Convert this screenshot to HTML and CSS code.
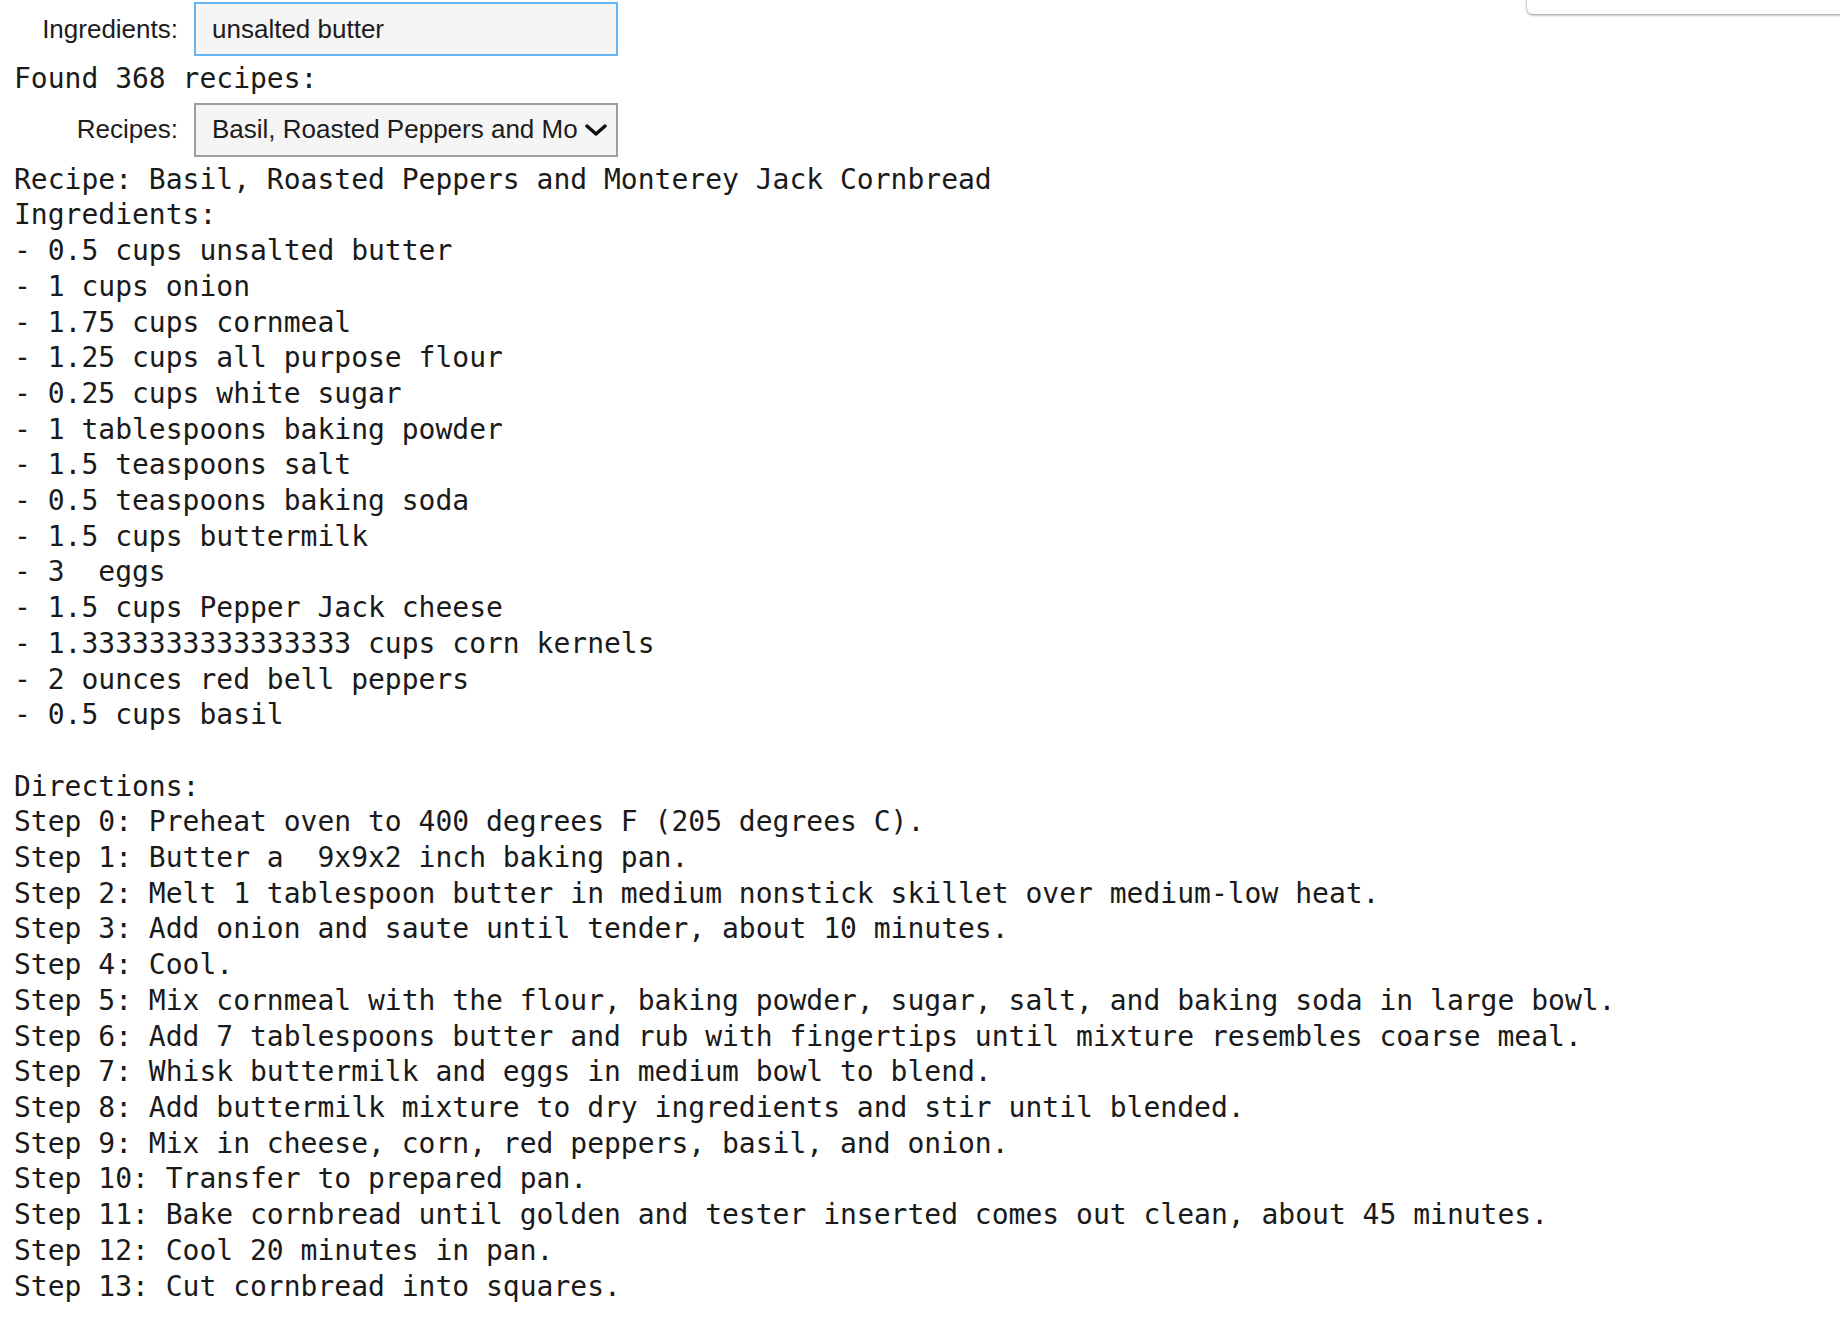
FILE: index.html
```html
<!DOCTYPE html>
<html lang="en">
<head>
<meta charset="utf-8">
<title>Recipe finder</title>
<link rel="stylesheet" href="styles.css">
</head>
<body>
<div class="floating-panel"></div>
<div class="widget-row row-ingredients">
  <label class="widget-label">Ingredients:</label>
  <div class="text-input">unsalted butter</div>
</div>
<pre class="output found">Found 368 recipes:</pre>
<div class="widget-row row-recipes">
  <label class="widget-label">Recipes:</label>
  <div class="select-box">
    <span class="select-text">Basil, Roasted Peppers and Monterey Jack Cornbread</span>
    <svg class="chevron" width="22" height="12" viewBox="0 0 22 12"><polyline points="2,2 11,10 20,2" fill="none" stroke="#111" stroke-width="3.4" stroke-linecap="round" stroke-linejoin="round"/></svg>
  </div>
</div>
<pre class="output recipe">Recipe: Basil, Roasted Peppers and Monterey Jack Cornbread
Ingredients:
- 0.5 cups unsalted butter
- 1 cups onion
- 1.75 cups cornmeal
- 1.25 cups all purpose flour
- 0.25 cups white sugar
- 1 tablespoons baking powder
- 1.5 teaspoons salt
- 0.5 teaspoons baking soda
- 1.5 cups buttermilk
- 3  eggs
- 1.5 cups Pepper Jack cheese
- 1.3333333333333333 cups corn kernels
- 2 ounces red bell peppers
- 0.5 cups basil

Directions:
Step 0: Preheat oven to 400 degrees F (205 degrees C).
Step 1: Butter a  9x9x2 inch baking pan.
Step 2: Melt 1 tablespoon butter in medium nonstick skillet over medium-low heat.
Step 3: Add onion and saute until tender, about 10 minutes.
Step 4: Cool.
Step 5: Mix cornmeal with the flour, baking powder, sugar, salt, and baking soda in large bowl.
Step 6: Add 7 tablespoons butter and rub with fingertips until mixture resembles coarse meal.
Step 7: Whisk buttermilk and eggs in medium bowl to blend.
Step 8: Add buttermilk mixture to dry ingredients and stir until blended.
Step 9: Mix in cheese, corn, red peppers, basil, and onion.
Step 10: Transfer to prepared pan.
Step 11: Bake cornbread until golden and tester inserted comes out clean, about 45 minutes.
Step 12: Cool 20 minutes in pan.
Step 13: Cut cornbread into squares.</pre>
</body>
</html>
```
FILE: styles.css
```css
html, body {
  margin: 0;
  padding: 0;
  background: #ffffff;
}

body {
  position: relative;
  min-height: 1322px;
  overflow: hidden;
  color: #1a1a1a;
}

.floating-panel {
  position: absolute;
  top: -12px;
  left: 1527px;
  right: -12px;
  height: 26px;
  background: #ffffff;
  border-radius: 6px;
  box-shadow: 0 1px 3px rgba(0, 0, 0, 0.45);
}

.widget-row {
  display: flex;
  align-items: center;
  height: 54px;
}

.row-ingredients {
  margin-top: 2px;
}

.row-recipes {
  margin-top: 6px;
}

.widget-label {
  width: 178px;
  margin-right: 16px;
  text-align: right;
  font-family: "Liberation Sans", Arial, sans-serif;
  font-size: 26px;
  color: #1c1c1c;
  white-space: nowrap;
}

.text-input,
.select-box {
  box-sizing: border-box;
  width: 424px;
  height: 54px;
  padding-left: 16px;
  display: flex;
  align-items: center;
  font-family: "Liberation Sans", Arial, sans-serif;
  font-size: 26px;
  color: #1c1c1c;
  background: #f5f5f5;
}

.text-input {
  border: 2px solid #64b5f6;
}

.select-box {
  border: 2px solid #9e9e9e;
}

.select-text {
  width: 366px;
  overflow: hidden;
  white-space: nowrap;
  text-overflow: clip;
}

.chevron {
  margin-left: 7px;
  flex: none;
}

.output {
  margin: 0 0 0 14px;
  font-family: "DejaVu Sans Mono", "Liberation Mono", monospace;
  font-size: 28px;
  line-height: 35.7px;
  color: #1a1a1a;
  white-space: pre;
}

.found {
  margin-top: 5px;
}

.recipe {
  margin-top: 5px;
}
```
